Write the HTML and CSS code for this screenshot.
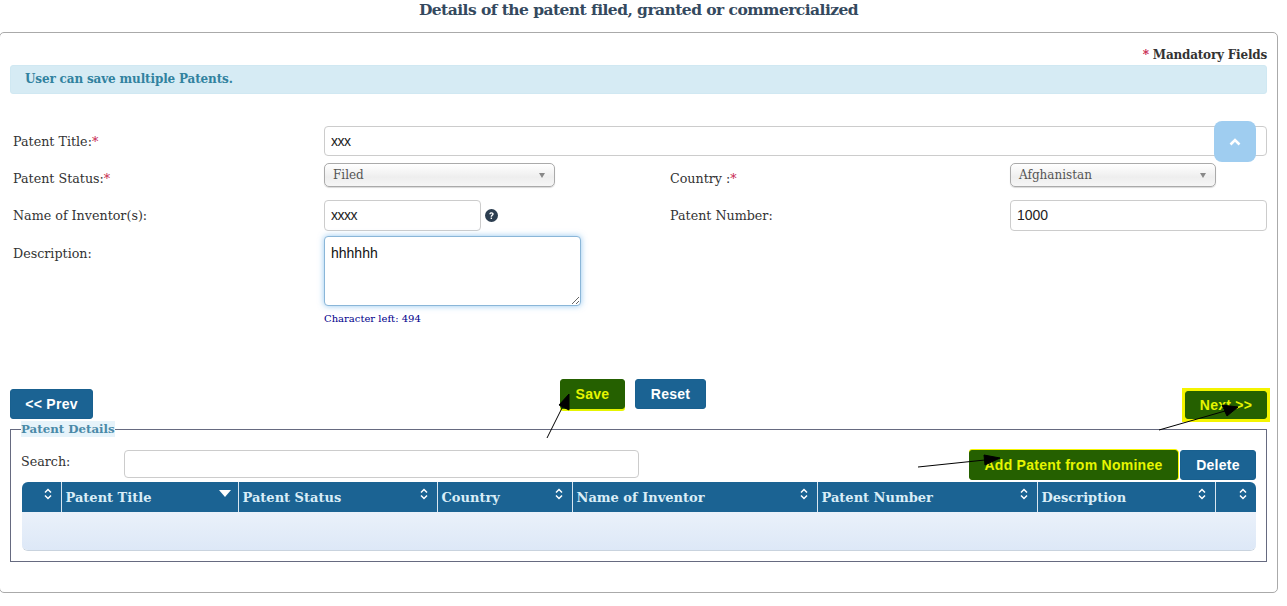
FILE: index.html
```html
<!DOCTYPE html>
<html lang="en">
<head>
    <meta charset="UTF-8">
    <title>Details of the patent filed, granted or commercialized</title>
    <link rel="stylesheet" href="styles.css">
</head>
<body>
    <svg width="0" height="0" class="defs">
        <symbol id="sort" viewBox="0 0 8 12">
            <path d="M1 4.5 4 1.5 7 4.5M1 7.5 4 10.5 7 7.5" fill="none" stroke="currentColor" stroke-width="1.5"/>
        </symbol>
    </svg>

    <h1 class="page-title">Details of the patent filed, granted or commercialized</h1>

    <div class="panel">
        <div class="mandatory"><span class="req">*</span> Mandatory Fields</div>
        <div class="alert">User can save multiple Patents.</div>

        <div class="form-grid">
            <label class="row-title">Patent Title:<span class="req">*</span></label>
            <input class="input wide" type="text" value="xxx">

            <label class="row-status">Patent Status:<span class="req">*</span></label>
            <div class="select status-select">Filed<span class="caret"></span></div>
            <label class="row-status second">Country :<span class="req">*</span></label>
            <div class="select country-select">Afghanistan<span class="caret"></span></div>

            <label class="row-name">Name of Inventor(s):</label>
            <div class="with-help">
                <input class="input inventor" type="text" value="xxxx">
                <svg class="help" viewBox="0 0 24 24" width="13" height="13">
                    <circle cx="12" cy="12" r="12" fill="#2c3e50"/>
                    <path d="M8 9.5C8 7 10 6 12 6c2.400 0 4 1.400 4 3.300 0 2.900-3 2.700-3 5.200h-2.600c0-3.600 3-3.500 3-5.100 0-.8-.6-1.300-1.500-1.300-1 0-1.500.6-1.500 1.400z" fill="#fff"/>
                    <rect x="10.400" y="15.800" width="2.600" height="2.600" fill="#fff"/>
                </svg>
            </div>
            <label class="row-name second">Patent Number:</label>
            <input class="input number" type="text" value="1000">

            <label class="row-desc">Description:</label>
            <div class="desc-cell">
                <textarea class="desc">hhhhhh</textarea>
                <div class="char-left">Character left: 494</div>
            </div>
        </div>

        <div class="actions">
            <button class="btn prev">&lt;&lt; Prev</button>
            <div class="actions-mid">
                <button class="btn btn-green save">Save</button>
                <button class="btn reset">Reset</button>
            </div>
            <div class="next-wrap">
                <button class="btn btn-green next">Next &gt;&gt;</button>
            </div>
        </div>

        <fieldset class="details">
            <legend>Patent Details</legend>
            <div class="toolbar">
                <label class="search-label">Search:</label>
                <input class="input search" type="text">
                <button class="btn btn-green add">Add Patent from Nominee</button>
                <button class="btn delete">Delete</button>
            </div>
            <div class="grid-wrap">
                <table class="grid">
                    <colgroup>
                        <col class="c0"><col class="c1"><col class="c2"><col class="c3">
                        <col class="c4"><col class="c5"><col class="c6"><col class="c7">
                    </colgroup>
                    <thead>
                        <tr>
                            <th><svg class="sort"><use href="#sort"/></svg></th>
                            <th>Patent Title<svg class="sorted" viewBox="0 0 12 7"><path d="M0 0h12L6 7z" fill="#fff"/></svg></th>
                            <th>Patent Status<svg class="sort"><use href="#sort"/></svg></th>
                            <th>Country<svg class="sort"><use href="#sort"/></svg></th>
                            <th>Name of Inventor<svg class="sort"><use href="#sort"/></svg></th>
                            <th>Patent Number<svg class="sort"><use href="#sort"/></svg></th>
                            <th>Description<svg class="sort"><use href="#sort"/></svg></th>
                            <th><svg class="sort"><use href="#sort"/></svg></th>
                        </tr>
                    </thead>
                    <tbody>
                        <tr><td colspan="8"></td></tr>
                    </tbody>
                </table>
            </div>
        </fieldset>
    </div>

    <!-- back to top -->
    <a class="to-top">
        <svg viewBox="0 0 12 8" width="12" height="8"><path d="M1.500 6.500 6 2l4.500 4.500" fill="none" stroke="#fff" stroke-width="2.600"/></svg>
    </a>

    <!-- arrows someone drew on the screenshot -->
    <svg class="arrows" width="1287" height="606">
        <g stroke="#000" stroke-width="1" fill="#000">
            <line x1="547" y1="438" x2="565" y2="402"/>
            <path d="M569 394 569 410 559 405z"/>
            <line x1="1159" y1="430" x2="1225" y2="411"/>
            <path d="M1238 407 1227 416 1222 405z"/>
            <line x1="918" y1="467" x2="985" y2="460"/>
            <path d="M1000 458 985 465 984 455z"/>
        </g>
    </svg>
</body>
</html>
```

FILE: styles.css
```css
html, body {
    margin: 0;
    height: 606px;
    overflow: hidden;
}
body {
    position: relative;
    font-family: "DejaVu Serif", serif;
    font-size: 13px;
    color: #333;
    background-color: #fff;
}
.defs {
    position: absolute;
}
.page-title {
    margin: 0;
    height: 32px;
    width: 1277px;
    line-height: 20px;
    text-align: center;
    font-size: 15.500px;
    letter-spacing: -0.550px;
    font-weight: bold;
    color: #34495e;
}
.panel {
    box-sizing: border-box;
    width: 1279px;
    height: 561px;
    margin-left: -1px;
    padding: 13px 10px 0 10px;
    border: 1px solid #aaa;
    border-radius: 5px;
}
.req {
    color: #c7254e;
}
.mandatory {
    height: 19px;
    line-height: 19px;
    text-align: right;
    font-size: 12px;
    letter-spacing: -0.200px;
    font-weight: bold;
}
.alert {
    box-sizing: border-box;
    height: 29px;
    padding-left: 14px;
    line-height: 27px;
    font-size: 12px;
    letter-spacing: -0.150px;
    font-weight: bold;
    color: #31829f;
    background-color: #d6ebf4;
    border: 1px solid #d0e8f2;
    border-radius: 3px;
}

/* form */
.form-grid {
    display: grid;
    grid-template-columns: 314px 346px 340px 257px;
    grid-template-rows: 37px 37px 36px auto;
    margin-top: 32px;
}
.form-grid label {
    padding-left: 3px;
    font-size: 12.700px;
    line-height: 20px;
}
.form-grid .second {
    padding-left: 0;
}
.form-grid .row-title { padding-top: 6px; }
.form-grid .row-status { padding-top: 6px; }
.form-grid .row-name { padding-top: 6px; }
.form-grid .row-desc { padding-top: 8px; }
.input {
    box-sizing: border-box;
    height: 31px;
    padding: 0 6px 1px 6px;
    border: 1px solid #ccc;
    border-radius: 4px;
    font-family: "Liberation Sans", Arial, sans-serif;
    font-size: 14px;
    color: #222;
    outline: none;
}
.wide {
    grid-column: 2 / 5;
    height: 30px;
    letter-spacing: -0.500px;
}
.select {
    position: relative;
    box-sizing: border-box;
    height: 24px;
    padding-left: 8px;
    line-height: 22px;
    font-size: 12px;
    color: #555;
    border: 1px solid #aaa;
    border-radius: 5px;
    background: linear-gradient(#fff, #eee 60%, #f6f6f6);
    box-shadow: 0 1px 1px rgba(0,0,0,0.15);
}
.status-select {
    width: 231px;
}
.country-select {
    width: 206px;
}
.caret {
    position: absolute;
    right: 9px;
    top: 9px;
    border-left: 3px solid transparent;
    border-right: 3px solid transparent;
    border-top: 5px solid #888;
}
.with-help {
    display: flex;
    align-items: center;
    gap: 4px;
    height: 31px;
}
.inventor {
    width: 157px;
    letter-spacing: -0.500px;
}
.number {
    width: 257px;
}
.desc-cell {
    grid-column: 2 / 5;
}
.desc {
    display: block;
    box-sizing: border-box;
    width: 257px;
    height: 70px;
    padding: 8px 6px;
    border: 1px solid #8ab6d8;
    border-radius: 4px;
    font-family: "Liberation Sans", Arial, sans-serif;
    font-size: 14px;
    color: #111;
    box-shadow: 0 0 6px rgba(102,175,233,0.7);
    outline: none;
}
.char-left {
    margin-top: 6px;
    line-height: 14px;
    font-size: 10px;
    color: #00008b;
}

/* buttons */
.actions {
    position: relative;
    display: flex;
    justify-content: space-between;
    align-items: flex-end;
    height: 40px;
    margin-top: 53px;
}
.actions-mid {
    position: absolute;
    left: 550px;
    top: 0;
    display: flex;
    gap: 10px;
}
.btn {
    box-sizing: border-box;
    height: 30px;
    padding: 0;
    border: 1px solid #19608f;
    border-radius: 3px;
    background-color: #1b6393;
    color: #fff;
    font-family: "Liberation Sans", Arial, sans-serif;
    font-size: 14px;
    font-weight: bold;
    letter-spacing: 0.270px;
    white-space: nowrap;
    cursor: pointer;
}
.btn-green {
    background-color: #256000;
    border-color: #256000;
    color: #e6f500;
}
.prev {
    width: 83px;
}
.save {
    width: 65px;
    box-shadow: 0 2px 0 #e6f500;
}
.reset {
    width: 71px;
}
.next-wrap {
    display: flex;
    padding: 3px;
    margin: 0 -3px -3px 0;
    background-color: #f4f400;
}
.next {
    width: 82px;
    height: 28px;
}

/* patent table */
.details {
    box-sizing: border-box;
    height: 141px;
    margin: 2px 0 0 0;
    padding: 0 10px;
    border: 1px solid #666a80;
}
.details legend {
    padding: 0;
    font-size: 11.800px;
    line-height: 16px;
    font-weight: bold;
    color: #4a8aa8;
    background-color: #e6f3fa;
}
.toolbar {
    display: flex;
    height: 32px;
    margin-top: 13px;
}
.search-label {
    width: 103px;
    font-size: 12.700px;
    line-height: 23px;
}
.search {
    width: 515px;
    height: 28px;
    margin-right: 330px;
}
.add {
    width: 209px;
    box-shadow: 0 -1px 0 #f4f400, 1px 0 0 #f4f400;
}
.delete {
    width: 76px;
    margin-left: 2px;
}
.grid-wrap {
    width: 1234px;
    margin-left: 1px;
    overflow: hidden;
    border-radius: 6px;
    border-bottom: 1px solid #c9d3de;
}
.grid {
    width: 1234px;
    table-layout: fixed;
    border-collapse: collapse;
}
.c0 { width: 39px; }
.c1 { width: 177px; }
.c2 { width: 199px; }
.c3 { width: 135px; }
.c4 { width: 245px; }
.c5 { width: 220px; }
.c6 { width: 178px; }
.c7 { width: 41px; }
.grid th {
    position: relative;
    box-sizing: border-box;
    height: 30px;
    padding: 0 4px;
    text-align: left;
    font-size: 13px;
    font-weight: bold;
    color: #d9edf7;
    background-color: #1b6393;
    border-left: 1px solid #d9e6f0;
}
.grid th:first-child {
    border-left: none;
}
.sort {
    position: absolute;
    right: 9px;
    top: 6px;
    width: 8px;
    height: 12px;
    color: #fff;
}
.sorted {
    position: absolute;
    right: 7px;
    top: 8px;
    width: 12px;
    height: 7px;
}
.grid td {
    height: 38px;
    padding: 0;
    background: linear-gradient(#eaf1fa, #dde8f7);
}

.to-top {
    position: absolute;
    left: 1214px;
    top: 121px;
    display: flex;
    align-items: center;
    justify-content: center;
    width: 42px;
    height: 41px;
    border-radius: 8px;
    background-color: #9fcdf0;
}
.arrows {
    position: absolute;
    left: 0;
    top: 0;
    pointer-events: none;
}
```
